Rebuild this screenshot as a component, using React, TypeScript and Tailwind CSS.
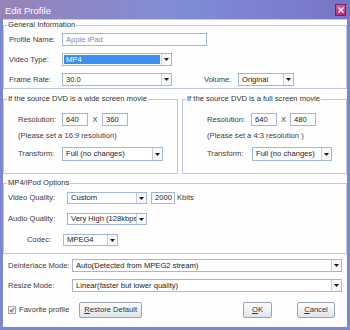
import React from "react";

function Arrow() {
  return (
    <div className="w-[10px] h-full border-l border-[#c3cde3] bg-[#f7f8fb] flex items-center justify-center">
      <svg width="5" height="3" viewBox="0 0 5 3">
        <path d="M0 0h5L2.5 3z" fill="#1a1a1a" />
      </svg>
    </div>
  );
}

function Select({
  value,
  className,
  selected,
}: {
  value: string;
  className: string;
  selected?: boolean;
}) {
  return (
    <div className={`flex border border-[#a3b6da] bg-white ${className}`}>
      <div className="flex-1 flex items-stretch overflow-hidden p-px">
        <span
          className={`flex-1 flex items-center px-[2px] ${
            selected ? "bg-[#3b8fef] text-white" : "text-[#222]"
          }`}
        >
          {value}
        </span>
      </div>
      <Arrow />
    </div>
  );
}

function Input({
  value,
  className,
  muted,
}: {
  value: string;
  className: string;
  muted?: boolean;
}) {
  return (
    <div
      className={`flex items-center border border-[#a3b6da] bg-white px-[3px] ${
        muted ? "text-[#8c8c8c]" : "text-[#222]"
      } ${className}`}
    >
      {value}
    </div>
  );
}

function Button({ children, className }: { children: React.ReactNode; className: string }) {
  return (
    <div
      className={`flex items-center justify-center rounded-[2px] border border-[#98a3ba] bg-gradient-to-b from-[#fdfdfd] to-[#dfe4ec] text-[#333] ${className}`}
    >
      {children}
    </div>
  );
}

export default function App() {
  return (
    <div className="w-[350px] h-[330px] flex flex-col whitespace-nowrap bg-[#7c87cf] font-['Liberation_Sans',Arial,sans-serif] text-[7.6px] leading-[10px] text-[#3c3c3c]">
      {/* title bar */}
      <div className="h-[19px] flex items-center pl-[5px] pr-[4px] bg-gradient-to-r from-[#9683b9] via-[#808dd6] to-[#7774c8]">
        <span className="text-white text-[9.5px] leading-[12px] mt-[2px]">Edit Profile</span>
        <div className="ml-auto w-[11px] h-[12px] mt-[1px] border border-[#6a2a55] bg-gradient-to-b from-[#e0589c] to-[#b92f74] flex items-center justify-center">
          <svg width="6" height="6" viewBox="0 0 6 6">
            <path d="M0.5 0.5l5 5M5.5 0.5l-5 5" stroke="#fff" strokeWidth="1.4" />
          </svg>
        </div>
      </div>

      <div className="flex-1 mx-[3px] mb-[3px] bg-[#fefefe] border-t border-[#c3cdea] flex flex-col">
        {/* General Information */}
        <fieldset className="border border-[#bcc7df] pb-[2px]">
          <legend className="ml-[3px] px-px leading-[10px] text-[#333]">General Information</legend>
          <div className="pl-[5px] pt-[3px] flex flex-col gap-[7px]">
            <div className="flex items-center h-[13px]">
              <span className="w-[53px]">Profile Name:</span>
              <Input value="Apple iPad" muted className="w-[145px] h-[13px]" />
            </div>
            <div className="flex items-center h-[13px]">
              <span className="w-[53px]">Video Type:</span>
              <Select value="MP4" selected className="w-[110px] h-[13px]" />
            </div>
            <div className="flex items-center h-[13px]">
              <span className="w-[53px]">Frame Rate:</span>
              <Select value="30.0" className="w-[110px] h-[13px]" />
              <span className="ml-[32px] w-[34px]">Volume:</span>
              <Select value="Original" className="w-[56px] h-[13px]" />
            </div>
          </div>
        </fieldset>

        {/* DVD boxes */}
        <div className="flex gap-[4px] mt-[5px]">
          <fieldset className="w-[175px] border border-[#bcc7df] pb-[12px]">
            <legend className="ml-[3px] px-px leading-[10px] text-[#333]">
              If the source DVD is a wide screen movie
            </legend>
            <div className="pl-[14px] pt-[9px] flex flex-col">
              <div className="flex items-center h-[13px]">
                <span className="w-[44px]">Resolution:</span>
                <Input value="640" className="w-[26px] h-[13px]" />
                <span className="w-[14px] text-center">X</span>
                <Input value="360" className="w-[26px] h-[13px]" />
              </div>
              <div className="mt-[5px]">(Please set a 16:9 resolution)</div>
              <div className="flex items-center h-[14px] mt-[6px]">
                <span className="w-[44px]">Transform:</span>
                <Select value="Full (no changes)" className="w-[101px] h-[14px]" />
              </div>
            </div>
          </fieldset>
          <fieldset className="flex-1 border border-[#bcc7df] pb-[12px]">
            <legend className="ml-[3px] px-px leading-[10px] text-[#333]">
              If the source DVD is a full screen movie
            </legend>
            <div className="pl-[24px] pt-[9px] flex flex-col">
              <div className="flex items-center h-[13px]">
                <span className="w-[44px]">Resolution:</span>
                <Input value="640" className="w-[26px] h-[13px]" />
                <span className="w-[13px] text-center">X</span>
                <Input value="480" className="w-[26px] h-[13px]" />
              </div>
              <div className="mt-[5px]">(Please set a 4:3 resolution )</div>
              <div className="flex items-center h-[14px] mt-[6px]">
                <span className="w-[45px]">Transform:</span>
                <Select value="Full (no changes)" className="w-[80px] h-[14px]" />
              </div>
            </div>
          </fieldset>
        </div>

        {/* MP4/iPod options */}
        <fieldset className="mt-[4px] border border-[#bcc7df] pb-[7px]">
          <legend className="ml-[3px] px-px leading-[10px] text-[#333]">MP4/iPod Options</legend>
          <div className="pl-[4px] pt-[4px] flex flex-col gap-[9px]">
            <div className="flex items-center h-[12px]">
              <span className="w-[59px]">Video Quality:</span>
              <Select value="Custom" className="w-[80px] h-[12px]" />
              <Input value="2000" className="ml-[4px] w-[24px] h-[12px]" />
              <span className="ml-[2px]">Kbits</span>
            </div>
            <div className="flex items-center h-[12px]">
              <span className="w-[59px]">Audio Quality:</span>
              <Select value="Very High (128kbps)" className="w-[80px] h-[12px]" />
            </div>
            <div className="flex items-center h-[12px]">
              <span className="w-[55px] pl-[19px]">Codec:</span>
              <Select value="MPEG4" className="w-[55px] h-[12px]" />
            </div>
          </div>
        </fieldset>

        {/* modes */}
        <div className="pl-[5px] mt-[5px] flex flex-col gap-[7px]">
          <div className="flex items-center h-[13px]">
            <span className="w-[64px]">Deinterlace Mode:</span>
            <Select value="Auto(Detected from MPEG2 stream)" className="w-[270px] h-[13px]" />
          </div>
          <div className="flex items-center h-[13px]">
            <span className="w-[64px]">Resize Mode:</span>
            <Select value="Linear(faster but lower quality)" className="w-[270px] h-[13px]" />
          </div>
        </div>

        {/* bottom buttons */}
        <div className="flex items-center pl-[5px] mt-[10px] h-[16px]">
          <div className="w-[8px] h-[8px] border border-[#a8a8a8] bg-[#f4f4f4] flex items-center justify-center">
            <svg width="6" height="6" viewBox="0 0 6 6">
              <path d="M0.8 3l1.6 1.7L5.2 1" stroke="#707070" strokeWidth="1.2" fill="none" />
            </svg>
          </div>
          <span className="ml-[3px]">Favorite profile</span>
          <Button className="ml-[10px] w-[63px] h-[16px]">
            <span>
              <span className="underline">R</span>estore Default
            </span>
          </Button>
          <Button className="ml-auto w-[29px] h-[16px]">
            <span>
              <span className="underline">O</span>K
            </span>
          </Button>
          <Button className="ml-[25px] mr-[12px] w-[38px] h-[16px]">
            <span>
              <span className="underline">C</span>ancel
            </span>
          </Button>
        </div>
      </div>
    </div>
  );
}
